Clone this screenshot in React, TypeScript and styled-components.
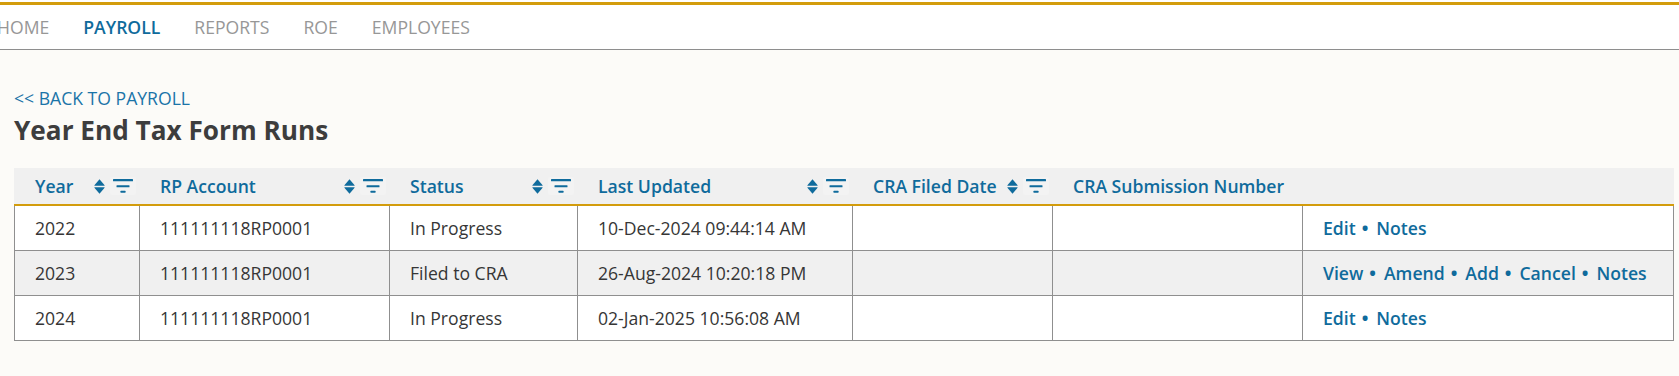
import * as React from 'react';
import styled, { createGlobalStyle } from 'styled-components';

const GlobalStyle = createGlobalStyle`
  html, body {
    margin: 0;
    padding: 0;
    background: #fcfbf8;
    font-family: "Open Sans", "Liberation Sans", sans-serif;
    color: #333;
  }
`;

const GOLD = '#d39c0c';
const BLUE = '#0f6b9c';

// Top navigation
const TopBar = styled.header`
  background: #fff;
  border-top: 2px solid #fff;
  border-bottom: 1px solid #8e8e8e;
`;

const NavRow = styled.nav`
  border-top: 3px solid ${GOLD};
  height: 44px;
  display: flex;
  align-items: center;
  gap: 34px;
  margin-left: -3px;
`;

const NavItem = styled.a<{ $active?: boolean }>`
  font-size: 17.6px;
  font-weight: ${(p) => (p.$active ? 600 : 400)};
  color: ${(p) => (p.$active ? BLUE : '#979797')};
  text-decoration: none;
  cursor: pointer;
`;

// Page body
const Main = styled.main`
  padding: 36px 5px 40px 14px;
`;

const BackLink = styled.a`
  display: block;
  font-size: 17.6px;
  line-height: 24px;
  color: #1a74a8;
  text-decoration: none;
  cursor: pointer;
`;

const Title = styled.h1`
  margin: 2px 0 20px;
  font-size: 26.2px;
  line-height: 36px;
  font-weight: 700;
  color: #3d3d3d;
`;

// Table
const Table = styled.table`
  width: 1660px;
  table-layout: fixed;
  border-collapse: separate;
  border-spacing: 0;
  font-size: 17.6px;
`;

const HeadCell = styled.th<{ $first?: boolean }>`
  box-sizing: border-box;
  height: 38px;
  padding: 0 4px 0 ${(p) => (p.$first ? 21 : 20)}px;
  background: #f0f0f0;
  border-bottom: 2px solid ${GOLD};
  text-align: left;
  font-weight: 600;
  color: ${BLUE};
  white-space: nowrap;
`;

const HeadInner = styled.div`
  display: flex;
  align-items: center;
  justify-content: space-between;
`;

const HeadTools = styled.span`
  display: flex;
  align-items: center;
  gap: 5px;
`;

const FilterButton = styled.span`
  display: flex;
  align-items: center;
  justify-content: center;
  padding: 2px 3px;
  background: #f3f3f3;
  border-radius: 2px;
`;

const Row = styled.tr<{ $alt?: boolean }>`
  background: ${(p) => (p.$alt ? '#f0f0f0' : '#fff')};
`;

const Cell = styled.td<{ $first?: boolean }>`
  box-sizing: border-box;
  height: 45px;
  padding: 0 8px 0 20px;
  border-right: 1px solid #8f8f8f;
  border-bottom: 1px solid #8f8f8f;
  border-left: ${(p) => (p.$first ? '1px solid #8f8f8f' : 'none')};
  color: #363636;
  white-space: nowrap;
`;

const ActionLink = styled.a`
  color: ${BLUE};
  font-weight: 600;
  text-decoration: none;
  cursor: pointer;
`;

const Sep = styled.span`
  color: ${BLUE};
  font-weight: 700;
  margin: 0 8px 0 6px;
`;

const SortIcon = () => (
  <svg width="11" height="15" viewBox="0 0 11 15" fill={BLUE}>
    <path d="M5.5 0.3 L10.6 6.2 Q10.8 6.8 10.2 6.8 L0.8 6.8 Q0.2 6.8 0.4 6.2 Z" />
    <path d="M0.8 8.2 L10.2 8.2 Q10.8 8.2 10.6 8.8 L5.5 14.7 L0.4 8.8 Q0.2 8.2 0.8 8.2 Z" />
  </svg>
);

const FilterIcon = () => (
  <svg width="20" height="14" viewBox="0 0 20 14" fill={BLUE}>
    <rect x="0" y="0" width="20" height="2.2" rx="0.5" />
    <rect x="3.5" y="6.2" width="13" height="2" rx="0.5" />
    <rect x="7.5" y="11.8" width="5" height="2" rx="0.5" />
  </svg>
);

type Column = { label: string; width: number; tools: boolean };

const columns: Column[] = [
  { label: 'Year', width: 126, tools: true },
  { label: 'RP Account', width: 250, tools: true },
  { label: 'Status', width: 188, tools: true },
  { label: 'Last Updated', width: 275, tools: true },
  { label: 'CRA Filed Date', width: 200, tools: true },
  { label: 'CRA Submission Number', width: 250, tools: false },
  { label: '', width: 371, tools: false },
];

type Run = {
  year: string;
  account: string;
  status: string;
  updated: string;
  actions: string[];
};

const runs: Run[] = [
  { year: '2022', account: '111111118RP0001', status: 'In Progress', updated: '10-Dec-2024 09:44:14 AM', actions: ['Edit', 'Notes'] },
  { year: '2023', account: '111111118RP0001', status: 'Filed to CRA', updated: '26-Aug-2024 10:20:18 PM', actions: ['View', 'Amend', 'Add', 'Cancel', 'Notes'] },
  { year: '2024', account: '111111118RP0001', status: 'In Progress', updated: '02-Jan-2025 10:56:08 AM', actions: ['Edit', 'Notes'] },
];

const navItems = ['HOME', 'PAYROLL', 'REPORTS', 'ROE', 'EMPLOYEES'];

export default function App() {
  return (
    <>
      <GlobalStyle />
      <TopBar>
        <NavRow>
          {navItems.map((n) => (
            <NavItem key={n} $active={n === 'PAYROLL'}>{n}</NavItem>
          ))}
        </NavRow>
      </TopBar>
      <Main>
        <BackLink>&lt;&lt; BACK TO PAYROLL</BackLink>
        <Title>Year End Tax Form Runs</Title>
        <Table>
          <colgroup>
            {columns.map((c, i) => (
              <col key={i} style={{ width: c.width }} />
            ))}
          </colgroup>
          <thead>
            <tr>
              {columns.map((c, i) => (
                <HeadCell key={i} $first={i === 0}>
                  <HeadInner>
                    <span>{c.label}</span>
                    {c.tools && (
                      <HeadTools>
                        <SortIcon />
                        <FilterButton>
                          <FilterIcon />
                        </FilterButton>
                      </HeadTools>
                    )}
                  </HeadInner>
                </HeadCell>
              ))}
            </tr>
          </thead>
          <tbody>
            {runs.map((r, i) => (
              <Row key={r.year} $alt={i % 2 === 1}>
                <Cell $first>{r.year}</Cell>
                <Cell>{r.account}</Cell>
                <Cell>{r.status}</Cell>
                <Cell>{r.updated}</Cell>
                <Cell />
                <Cell />
                <Cell>
                  {r.actions.map((a, j) => (
                    <React.Fragment key={a}>
                      {j > 0 && <Sep>•</Sep>}
                      <ActionLink>{a}</ActionLink>
                    </React.Fragment>
                  ))}
                </Cell>
              </Row>
            ))}
          </tbody>
        </Table>
      </Main>
    </>
  );
}
